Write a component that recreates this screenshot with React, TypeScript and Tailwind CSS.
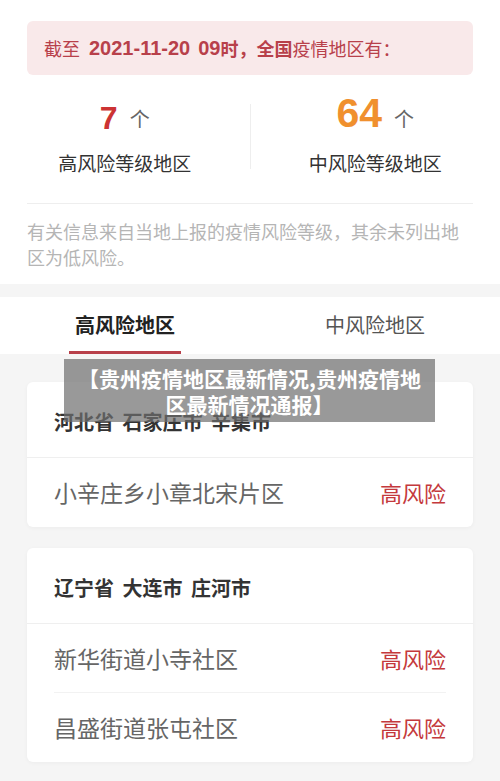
import React from "react";

type Area = { name: string; level: string };
type Group = { title: string; areas: Area[] };

const groups: Group[] = [
  { title: "河北省 石家庄市 辛集市", areas: [{ name: "小辛庄乡小章北宋片区", level: "高风险" }] },
  {
    title: "辽宁省 大连市 庄河市",
    areas: [
      { name: "新华街道小寺社区", level: "高风险" },
      { name: "昌盛街道张屯社区", level: "高风险" },
    ],
  },
];

const cjk = "font-['Noto_Sans_CJK_SC','Noto_Sans',sans-serif]";
const latin = "font-['Liberation_Sans','Noto_Sans_CJK_SC',sans-serif]";

function StatBlock({ value, label, color, size }: { value: string; label: string; color: string; size: string }) {
  return (
    <div className="flex-1 flex flex-col items-center">
      <div className="h-[37px] flex items-end gap-[12px]">
        <span className={`${latin} font-bold leading-none ${size} ${color}`}>{value}</span>
        <span className="text-[20px] leading-none text-[#666] pb-[5px]">个</span>
      </div>
      <div className="mt-[16px] text-[19px] leading-[26px] text-[#333]">{label}</div>
    </div>
  );
}

export default function App() {
  return (
    <div className={`relative w-[500px] min-h-[781px] bg-[#f5f5f5] ${cjk}`}>
      {/* summary */}
      <div className="bg-white px-[27px] pt-[21px]">
        <div className="h-[54px] rounded-[6px] bg-[#f9e9ea] flex items-center pl-[17px] text-[18px] text-[#b8404a]">
          截至
          <span className={`${latin} font-semibold text-[20px] ml-[9px]`}>2021-11-20</span>
          <span className={`${latin} font-semibold text-[20px] ml-[8px]`}>09</span>
          <span className="font-semibold">时，全国</span>
          疫情地区有：
        </div>

        <div className="flex items-center pt-[22px] pb-[27px] -mx-[27px]">
          <StatBlock value="7" label="高风险等级地区" color="text-[#cc3333]" size="text-[32px]" />
          <div className="w-px h-[65px] bg-[#eeeeee]" />
          <StatBlock value="64" label="中风险等级地区" color="text-[#f0902e]" size="text-[41px]" />
        </div>

        <p className="border-t border-[#eeeeee] pt-[14px] pb-[14px] text-[18px] leading-[26px] text-[#b5b5b5]">
          有关信息来自当地上报的疫情风险等级，其余未列出地区为低风险。
        </p>
      </div>

      {/* tabs */}
      <div className="mt-[13px] bg-white h-[57px] flex">
        <div className="flex-1 flex flex-col items-center justify-end">
          <span className="text-[20px] font-bold text-[#222] leading-[28px]">高风险地区</span>
          <span className="mt-[12px] w-[112px] h-[3px] bg-[#b8404a]" />
        </div>
        <div className="flex-1 flex flex-col items-center justify-end">
          <span className="text-[20px] text-[#555] leading-[28px]">中风险地区</span>
          <span className="mt-[12px] h-[3px]" />
        </div>
      </div>

      {/* lists */}
      <div className="px-[27px] pt-[28px] flex flex-col gap-[21px]">
        {groups.map((g) => (
          <div key={g.title} className="bg-white rounded-[6px] shadow-[0_1px_4px_rgba(0,0,0,0.04)]">
            <div className="h-[76px] flex items-center px-[27px] pt-[4px] border-b border-[#efefef] text-[20px] font-bold text-[#333] [word-spacing:4px]">
              {g.title}
            </div>
            {g.areas.map((a, i) => (
              <div
                key={a.name}
                className={`mx-[27px] h-[69px] flex items-center justify-between ${
                  i < g.areas.length - 1 ? "border-b border-[#f2f2f2]" : ""
                }`}
              >
                <span className="text-[23px] text-[#666]">{a.name}</span>
                <span className="text-[22px] text-[#c4393c]">{a.level}</span>
              </div>
            ))}
          </div>
        ))}
      </div>

      {/* title overlay */}
      <div className="absolute left-[64px] top-[359px] w-[371px] h-[63px] bg-[rgba(110,110,110,0.7)] flex flex-col items-center justify-center text-white font-bold text-[21px] leading-[26px]">
        <span>【贵州疫情地区最新情况,贵州疫情地</span>
        <span>区最新情况通报】</span>
      </div>
    </div>
  );
}
